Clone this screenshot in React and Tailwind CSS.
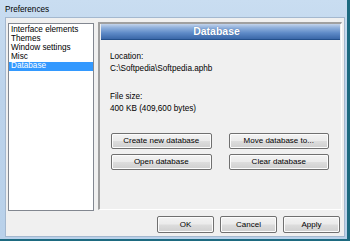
const items = ['Interface elements', 'Themes', 'Window settings', 'Misc', 'Database']

function WinButton({ children, className = '' }) {
  return (
    <button
      className={`flex items-center justify-center rounded-[2px] border border-[#707070] bg-[linear-gradient(to_bottom,#f3f3f3_0%,#ebebeb_48%,#dddddd_52%,#cfcfcf_100%)] text-[8px] leading-none text-black shadow-[inset_0_0_0_1px_#fcfcfc] ${className}`}
    >
      {children}
    </button>
  )
}

export default function App() {
  return (
    <div className="w-[350px] h-[241px] overflow-hidden border-r-[3px] border-b-[2px] border-[#1d6a80] font-['Liberation_Sans',Arial,sans-serif]">
      <div className="flex h-full flex-col bg-[linear-gradient(to_bottom,#c9ddf1_0%,#bcd3eb_40%,#b9d1ea_100%)] pl-[5px] pr-[2px] pb-[2px]">
        {/* Title bar */}
        <div className="flex h-[17px] items-center text-[8.2px] text-black">
          <span className="mt-[3px]">Preferences</span>
        </div>

        {/* Client area */}
        <div className="flex flex-1 flex-col border border-[#a4b8cf] bg-[#f0f0f0] pt-[4px] pl-[2px] pr-[2px] pb-[3px]">
          <div className="flex h-[189px] gap-[4px]">
            {/* Category list */}
            <div className="mt-[1px] h-[188px] w-[86px] border border-[#828790] bg-white pt-[2px] text-[8.2px] text-black">
              {items.map((item) => (
                <div
                  key={item}
                  className={`flex h-[9px] items-center pl-[2px] leading-none ${item === 'Database' ? 'bg-[#3399ff] text-white' : ''}`}
                >
                  {item}
                </div>
              ))}
            </div>

            {/* Settings panel */}
            <div className="flex h-[188px] flex-1 flex-col border-t-2 border-l-2 border-r border-b border-t-[#a0a0a0] border-l-[#a0a0a0] border-r-white border-b-white">
              <div className="mx-[1px] flex h-[16px] items-center justify-center border-b border-[#24508c] bg-[linear-gradient(to_bottom,#c3d3ea_0%,#8fb0dc_25%,#5e8ac7_60%,#3a67a8_100%)] pr-[8px]">
                <span className="text-[10.5px] font-bold text-white [text-shadow:0_0_1px_#3a5f95]">Database</span>
              </div>

              <div className="flex flex-col pl-[10px] pt-[11px] text-[8.2px] leading-[12px] text-black">
                <div>Location:</div>
                <div>C:\Softpedia\Softpedia.aphb</div>
                <div className="mt-[16px]">File size:</div>
                <div>400 KB (409,600 bytes)</div>

                <div className="mt-[18px] grid w-[219px] grid-cols-2 gap-x-[17px] gap-y-[5px] pl-[1px]">
                  <WinButton className="h-[16px]">Create new database</WinButton>
                  <WinButton className="h-[16px]">Move database to...</WinButton>
                  <WinButton className="h-[16px]">Open database</WinButton>
                  <WinButton className="h-[16px]">Clear database</WinButton>
                </div>
              </div>
            </div>
          </div>

          {/* Dialog buttons */}
          <div className="mt-[5px] flex justify-end gap-[6px] pr-[2px]">
            <WinButton className="h-[17px] w-[57px]">OK</WinButton>
            <WinButton className="h-[17px] w-[57px]">Cancel</WinButton>
            <WinButton className="h-[17px] w-[57px]">Apply</WinButton>
          </div>
        </div>
      </div>
    </div>
  )
}
